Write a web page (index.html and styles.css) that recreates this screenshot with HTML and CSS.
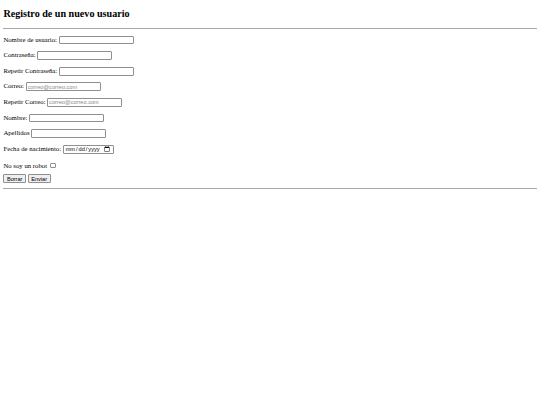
FILE: index.html
```html
<!DOCTYPE html>
<html lang="es">
<head>
<meta charset="utf-8">
<title>Registro de un nuevo usuario</title>
<link rel="stylesheet" href="styles.css">
</head>
<body>
<h2 class="title">Registro de un nuevo usuario</h2>
<hr class="rule">
<form class="form">
  <p class="row"><label for="u">Nombre de usuario:</label> <input class="field" type="text" id="u"></p>
  <p class="row"><label for="p">Contraseña:</label> <input class="field" type="password" id="p"></p>
  <p class="row"><label for="p2">Repetir Contraseña:</label> <input class="field" type="password" id="p2"></p>
  <p class="row"><label for="c">Correo:</label> <input class="field" type="email" id="c" placeholder="correo@correo.com"></p>
  <p class="row"><label for="c2">Repetir Correo:</label> <input class="field" type="email" id="c2" placeholder="correo@correo.com"></p>
  <p class="row"><label for="n">Nombre:</label> <input class="field" type="text" id="n"></p>
  <p class="row"><label for="a">Apellidos</label> <input class="field" type="text" id="a"></p>
  <p class="row"><label for="f">Fecha de nacimiento:</label> <input class="field date" type="date" id="f"></p>
  <p class="row row-check"><label for="r">No soy un robot</label> <input class="check" type="checkbox" id="r"></p>
  <div class="actions"><button class="btn" type="reset">Borrar</button> <button class="btn" type="submit">Enviar</button></div>
</form>
<hr class="rule">
</body>
</html>
```
FILE: styles.css
```css
body {
  margin: 0 3.375px 3.375px;
  padding: 0;
  font-family: "Liberation Serif", "Times New Roman", serif;
  font-size: 6.75px;
  color: #000;
  background: #fff;
}
.title {
  font-size: 10.125px;
  font-weight: bold;
  margin: 8.4px 0;
}
.rule {
  height: 0;
  border: 0;
  border-top: 1px solid #a9a9a9;
  margin: 3.375px 0;
}
.form {
  margin: 0;
}
.row {
  margin: 6.75px 0;
}
.row-check {
  padding-top: 2px;
  margin-bottom: 4.75px;
}
.actions {
  margin: 0;
  padding-bottom: 1.6px;
}
.field {
  box-sizing: border-box;
  width: 75px;
  height: 8.86px;
  padding: 0 0.84px;
  border: 1px solid #8f8f8f;
  border-radius: 1px;
  font-family: "Liberation Sans", Arial, sans-serif;
  font-size: 5.625px;
  background: #fff;
  color: #000;
  margin: 0;
}
.field::placeholder {
  color: #8a8a8a;
}
.date {
  width: 51px;
}
.check {
  appearance: none;
  -webkit-appearance: none;
  box-sizing: border-box;
  width: 5.5px;
  height: 5.5px;
  margin: 0 1.27px 0 1.69px;
  border: 1px solid #8f8f8f;
  border-radius: 1px;
  background: #fff;
  vertical-align: baseline;
}
.btn {
  box-sizing: border-box;
  height: 8.86px;
  padding: 0 2.53px;
  border: 1px solid #8f8f8f;
  border-radius: 1px;
  background: #efefef;
  font-family: "Liberation Sans", Arial, sans-serif;
  font-size: 5.625px;
  color: #000;
  margin: 0;
}
```
